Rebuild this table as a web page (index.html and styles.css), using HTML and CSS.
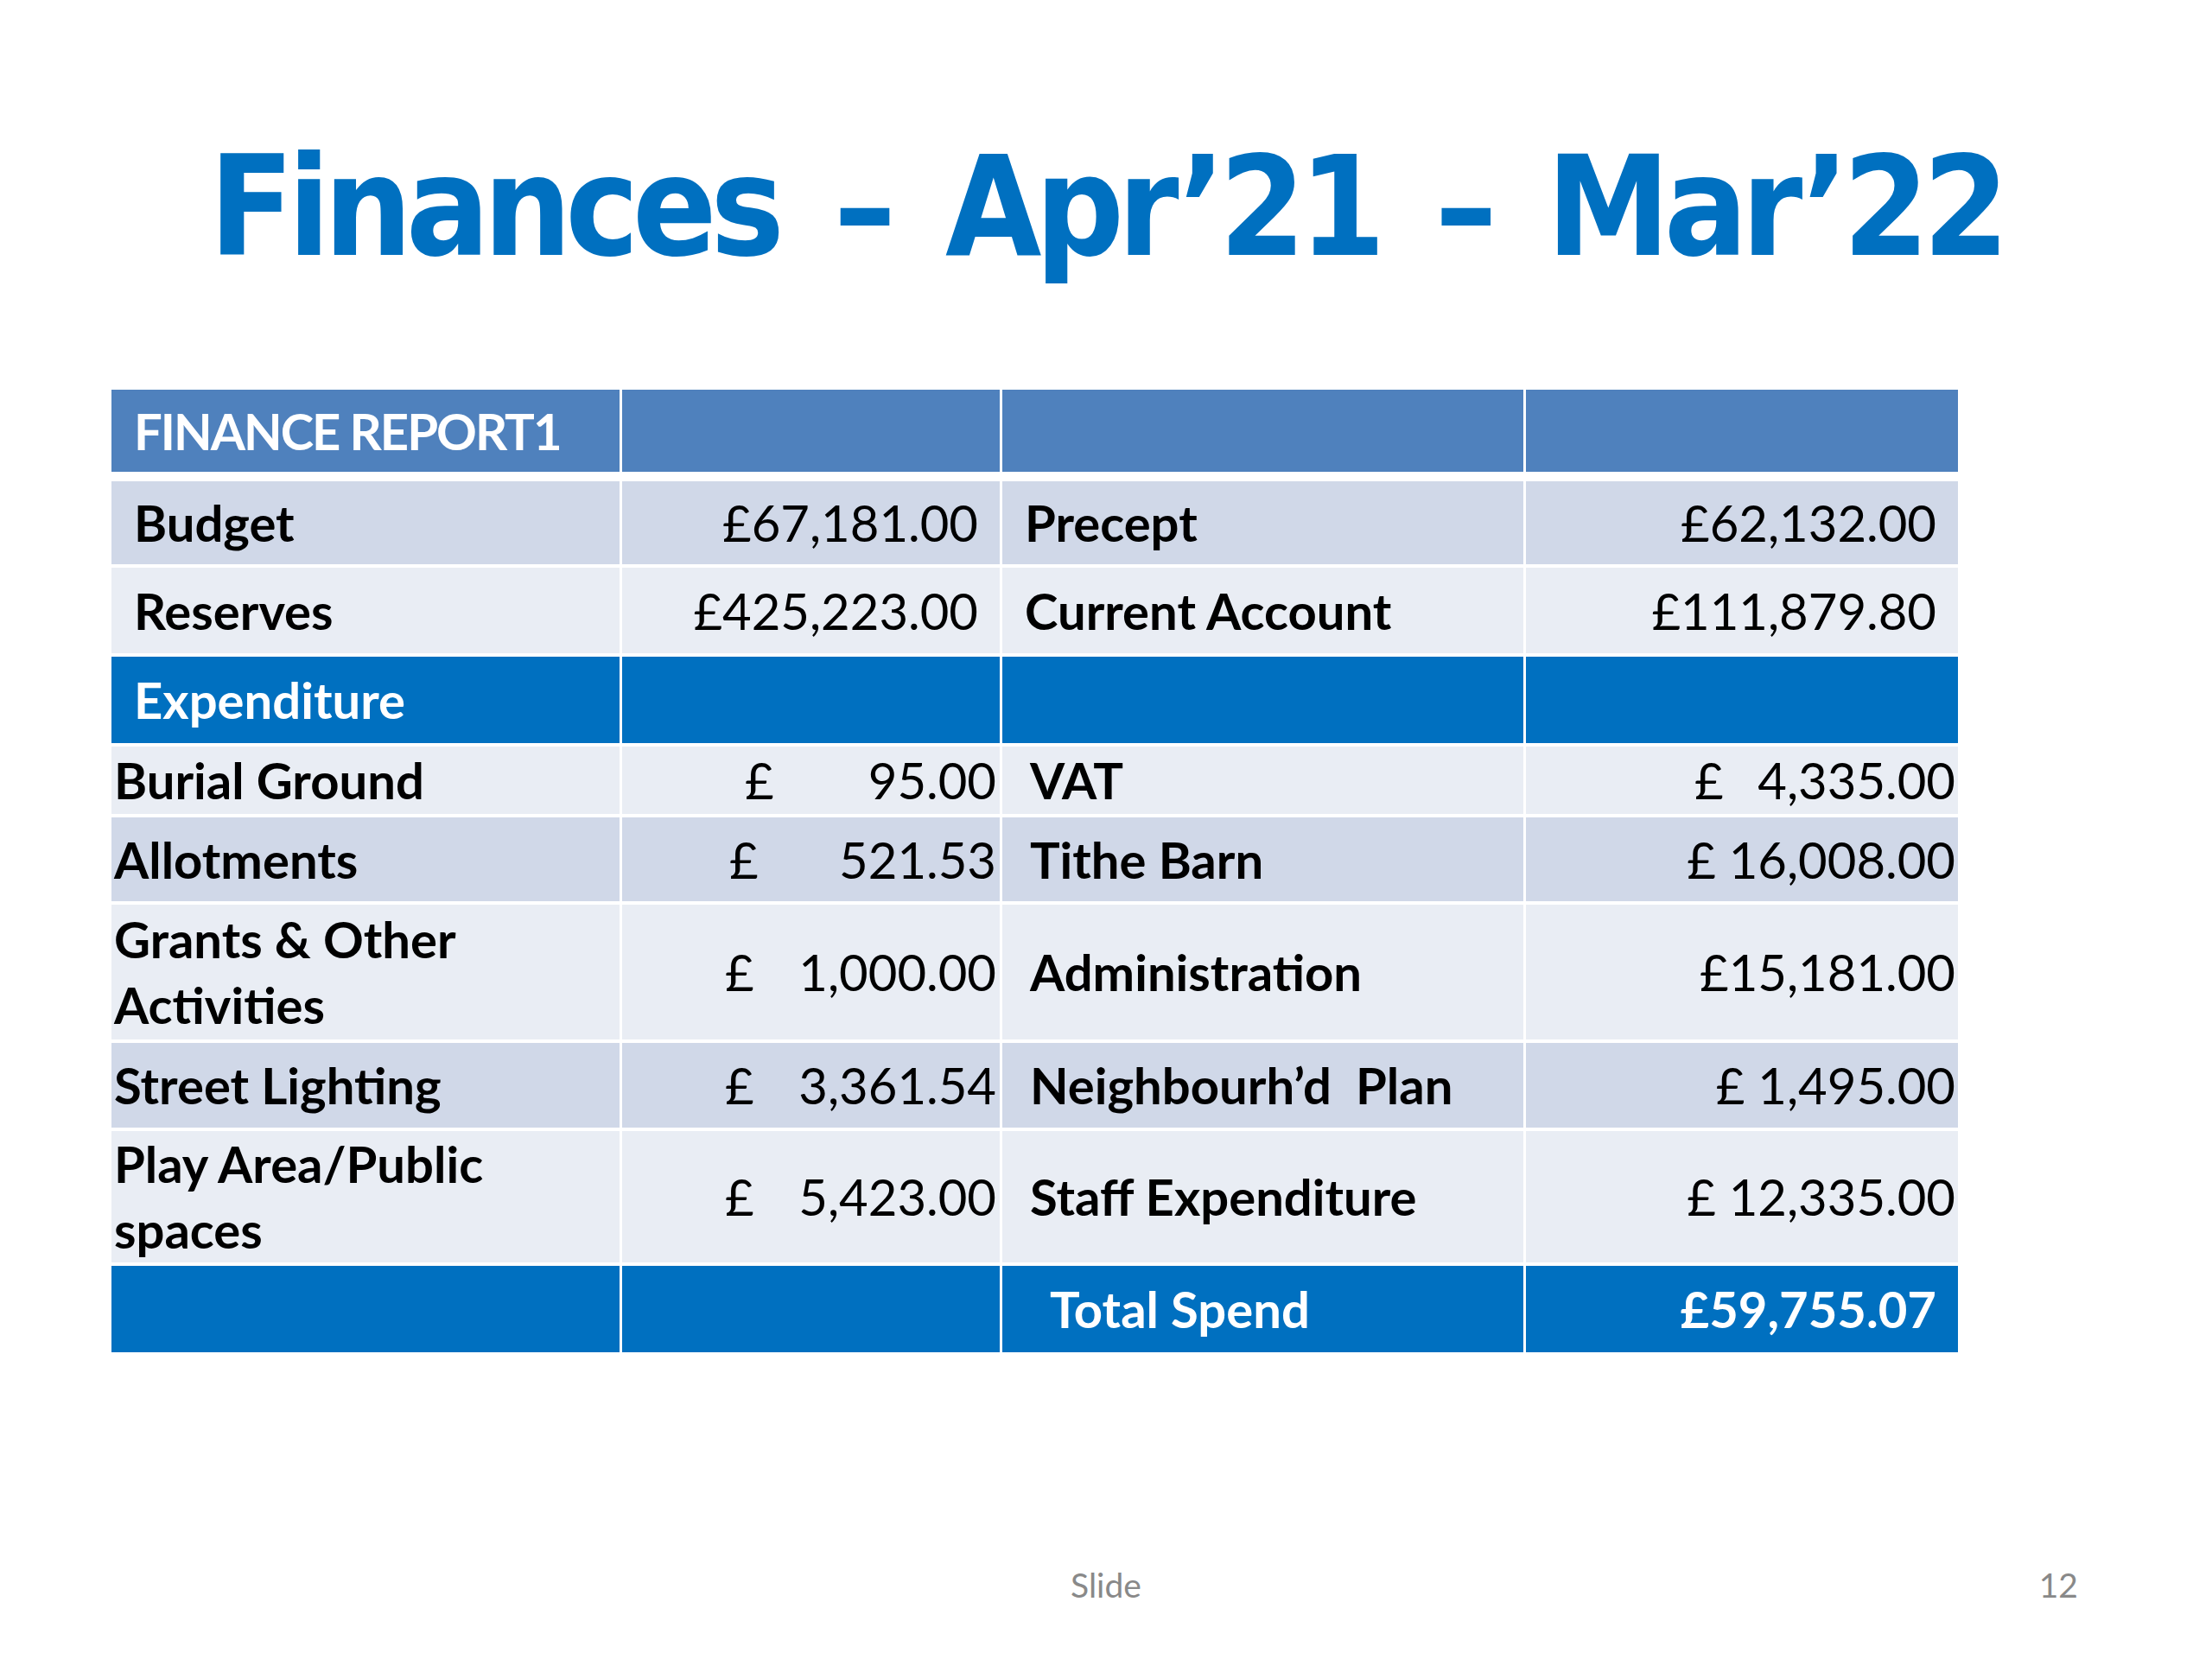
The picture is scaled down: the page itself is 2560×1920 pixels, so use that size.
FILE: index.html
```html
<!DOCTYPE html>
<html lang="en">
<head>
<meta charset="utf-8">
<title>Finances – Apr’21 – Mar’22</title>
<link rel="stylesheet" href="styles.css">
</head>
<body>
<div class="slide">
  <h1 class="title">Finances – Apr’21 – Mar’22</h1>

  <div class="tbl">
    <div class="row head">
      <div class="cell lbl pad-l caps">FINANCE REPORT1</div>
      <div class="cell"></div>
      <div class="cell"></div>
      <div class="cell"></div>
    </div>

    <div class="row band-dark h96">
      <div class="cell lbl pad-l">Budget</div>
      <div class="cell num pad-r">£67,181.00</div>
      <div class="cell lbl pad-l">Precept</div>
      <div class="cell num pad-r">£62,132.00</div>
    </div>

    <div class="row band-light h99">
      <div class="cell lbl pad-l">Reserves</div>
      <div class="cell num pad-r">£425,223.00</div>
      <div class="cell lbl pad-l">Current Account</div>
      <div class="cell num pad-r">£111,879.80</div>
    </div>

    <div class="row accent h100">
      <div class="cell lbl pad-l">Expenditure</div>
      <div class="cell"></div>
      <div class="cell"></div>
      <div class="cell"></div>
    </div>

    <div class="row band-light h78">
      <div class="cell lbl flush-l">Burial Ground</div>
      <div class="cell cur cur-142"><span>£</span><span>95.00</span></div>
      <div class="cell lbl in-l">VAT</div>
      <div class="cell cur cur-195 end"><span>£</span><span>4,335.00</span></div>
    </div>

    <div class="row band-dark h97">
      <div class="cell lbl flush-l">Allotments</div>
      <div class="cell cur cur-124"><span>£</span><span>521.53</span></div>
      <div class="cell lbl in-l">Tithe Barn</div>
      <div class="cell num flush-r">£ 16,008.00</div>
    </div>

    <div class="row band-light h156">
      <div class="cell lbl flush-l">Grants &amp; Other<br>Activities</div>
      <div class="cell cur cur-119"><span>£</span><span>1,000.00</span></div>
      <div class="cell lbl in-l">Administration</div>
      <div class="cell num flush-r">£15,181.00</div>
    </div>

    <div class="row band-dark h98">
      <div class="cell lbl flush-l">Street Lighting</div>
      <div class="cell cur cur-119"><span>£</span><span>3,361.54</span></div>
      <div class="cell lbl in-l pre">Neighbourh’d  Plan</div>
      <div class="cell num flush-r">£ 1,495.00</div>
    </div>

    <div class="row band-light h152">
      <div class="cell lbl flush-l">Play Area/Public<br>spaces</div>
      <div class="cell cur cur-119"><span>£</span><span>5,423.00</span></div>
      <div class="cell lbl in-l">Staff Expenditure</div>
      <div class="cell num flush-r">£ 12,335.00</div>
    </div>

    <div class="row accent h100">
      <div class="cell"></div>
      <div class="cell"></div>
      <div class="cell lbl total-l">Total Spend</div>
      <div class="cell num lbl pad-r">£59,755.07</div>
    </div>
  </div>

  <div class="footer">
    <div></div>
    <div class="foot-center">Slide</div>
    <div class="foot-right">12</div>
  </div>
</div>
</body>
</html>
```

FILE: styles.css
```css
html, body {
  margin: 0;
  padding: 0;
  background: #ffffff;
}

.slide {
  width: 2560px;
  height: 1920px;
  background: #ffffff;
  font-family: Lato, "Liberation Sans", sans-serif;
  color: #000000;
  overflow: hidden;
}

.title {
  margin: 0;
  box-sizing: border-box;
  height: 451px;
  padding-top: 160px;
  font-family: "DejaVu Sans Condensed", "DejaVu Sans", sans-serif;
  font-stretch: condensed;
  font-weight: bold;
  font-size: 160px;
  line-height: 160px;
  letter-spacing: -7.5px;
  word-spacing: 22px;
  color: #0070c0;
  text-align: center;
  white-space: nowrap;
}

.tbl {
  margin-left: 129px;
  width: 2137px;
  display: flex;
  flex-direction: column;
  gap: 4px;
}

.row {
  display: grid;
  grid-template-columns: 588px 437px 603px 500px;
  column-gap: 3px;
  background: #ffffff;
}

.row.head {
  height: 95px;
  margin-bottom: 7px;
}

.h78 { height: 78px; }
.h96 { height: 96px; }
.h97 { height: 97px; }
.h98 { height: 98px; }
.h99 { height: 99px; }
.h100 { height: 100px; }
.h152 { height: 152px; }
.h156 { height: 156px; }

.head .cell { background: #4f81bd; color: #ffffff; }
.accent .cell { background: #0070c0; color: #ffffff; }
.band-dark .cell { background: #d0d8e8; }
.band-light .cell { background: #e9edf4; }

.cell {
  display: flex;
  align-items: center;
  font-size: 58px;
  line-height: 76px;
  white-space: nowrap;
  box-sizing: border-box;
}

.lbl { font-weight: bold; }
.num { justify-content: flex-end; font-weight: normal; }
.num.lbl { font-weight: bold; }
.caps { letter-spacing: -2px; }

.pad-l { padding-left: 26px; }
.pad-r { padding-right: 25px; }
.flush-l { padding-left: 3px; }
.flush-r { padding-right: 3px; }
.in-l { padding-left: 32px; }
.total-l { padding-left: 55px; }
.pre { white-space: pre; }

.cur {
  justify-content: space-between;
  padding-right: 4px;
}
.cur.end { padding-right: 3px; }
.cur-119 { padding-left: 119px; }
.cur-124 { padding-left: 124px; }
.cur-142 { padding-left: 142px; }
.cur-195 { padding-left: 195px; }

.footer {
  margin-top: 244px;
  display: grid;
  grid-template-columns: 1fr auto 1fr;
  font-size: 39px;
  line-height: 50px;
  color: #898989;
}

.foot-center { text-align: center; }
.foot-right { text-align: right; padding-right: 155px; }
```
